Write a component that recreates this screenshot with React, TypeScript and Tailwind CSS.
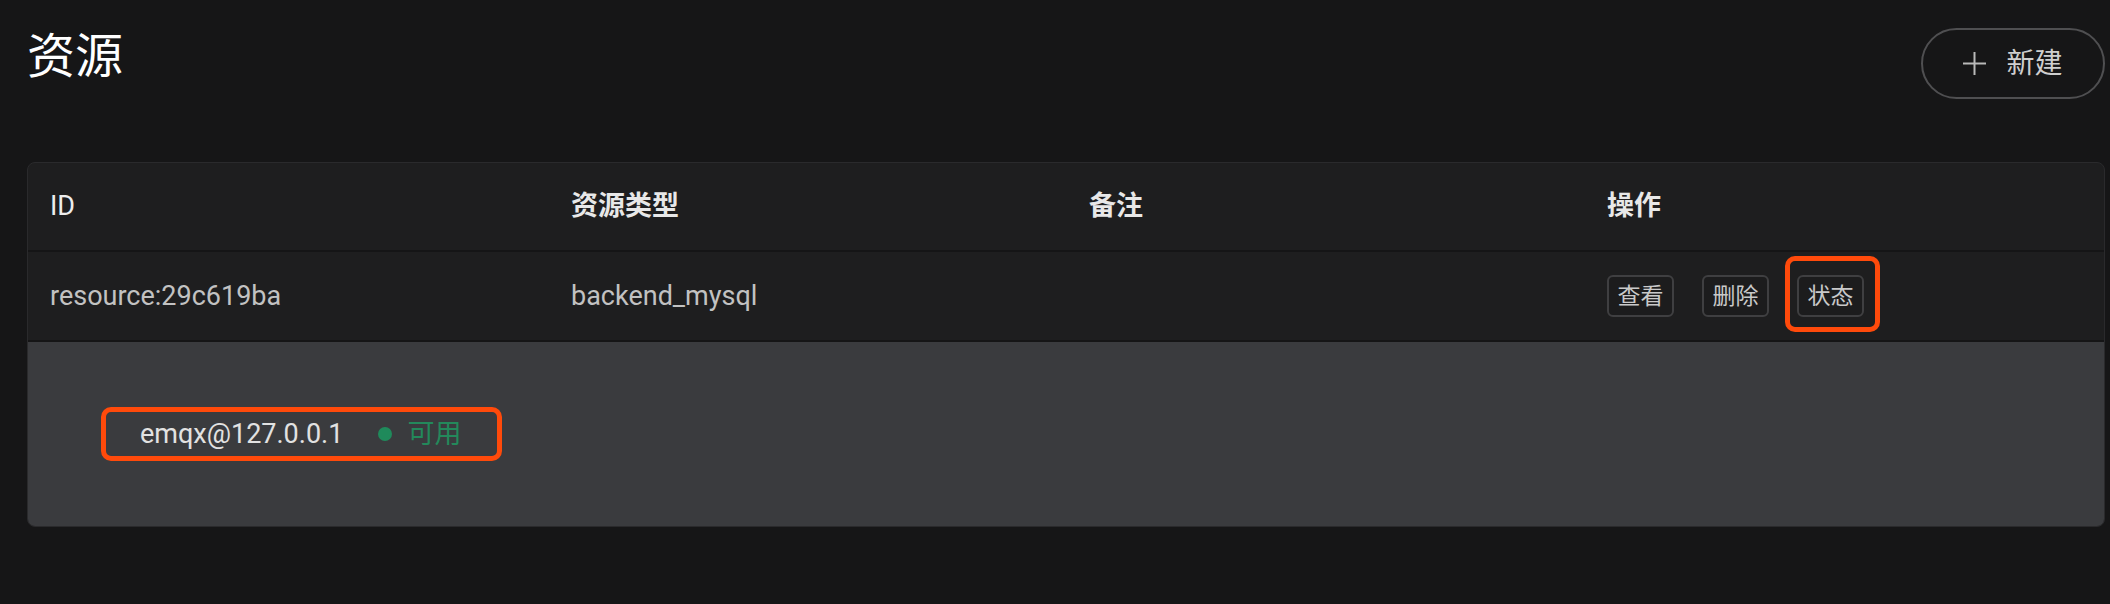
import React from "react";

const font = "font-['Roboto','Noto_Sans_CJK_SC',sans-serif]";

function PlusIcon() {
  return (
    <svg width="23" height="23" viewBox="0 0 23 23" className="block">
      <line x1="11.5" y1="0" x2="11.5" y2="23" stroke="#b9b9b9" strokeWidth="2" />
      <line x1="0" y1="11.5" x2="23" y2="11.5" stroke="#b9b9b9" strokeWidth="2" />
    </svg>
  );
}

function SmallButton({ label, marked }: { label: string; marked?: boolean }) {
  return (
    <span className="relative inline-flex">
      <span className="inline-flex h-[42px] w-[67px] items-center justify-center rounded-[6px] border-2 border-[#3f3f41] bg-[#1c1c1d] text-[23px] leading-none text-[#c9c9c9]">
        {label}
      </span>
      {marked && (
        <span className="pointer-events-none absolute -bottom-[15px] -left-[12px] -right-[16px] -top-[19px] rounded-[10px] border-[5px] border-[#ff4a0b]" />
      )}
    </span>
  );
}

export default function App() {
  return (
    <div className={`min-h-screen bg-[#161617] pl-[27px] pr-[5px] pt-[28px] ${font}`}>
      <div className="flex items-start justify-between">
        <h1 className="mt-[5px] text-[48px] font-normal leading-none text-white">资源</h1>
        <button className="flex h-[71px] w-[184px] items-center justify-center gap-[20px] rounded-full border-2 border-[#4f4f51] bg-transparent">
          <PlusIcon />
          <span className="text-[28px] leading-none text-[#cfcfcf]">新建</span>
        </button>
      </div>

      <div className="mt-[63px] overflow-hidden rounded-[8px] border border-[#2a2a2c] bg-[#1e1e1f]">
        <div className="grid h-[89px] grid-cols-[521px_518px_518px_1fr] items-center border-b-2 border-[#151516] pl-[22px] text-[27px] font-bold text-[#e8e8e8]">
          <div className="font-normal text-[#ededed]">ID</div>
          <div>资源类型</div>
          <div>备注</div>
          <div>操作</div>
        </div>
        <div className="grid h-[90px] grid-cols-[521px_518px_518px_1fr] items-center border-b-2 border-[#151516] pl-[22px] text-[27px] text-[#c2c2c2]">
          <div>resource:29c619ba</div>
          <div>backend_mysql</div>
          <div></div>
          <div className="flex items-center gap-[28px]">
            <SmallButton label="查看" />
            <SmallButton label="删除" />
            <SmallButton label="状态" marked />
          </div>
        </div>
        <div className="flex h-[184px] items-center bg-[#3a3b3e] pl-[73px]">
          <div className="flex h-[54px] items-center rounded-[10px] border-[5px] border-[#ff4a0b] pl-[34px] pr-[36px]">
            <span className="text-[27px] leading-none text-[#e2e2e2]">emqx@127.0.0.1</span>
            <span className="ml-[35px] h-[14px] w-[14px] rounded-full bg-[#1f8a5b]" />
            <span className="ml-[15px] text-[27px] leading-none text-[#23895b]">可用</span>
          </div>
        </div>
      </div>
    </div>
  );
}
